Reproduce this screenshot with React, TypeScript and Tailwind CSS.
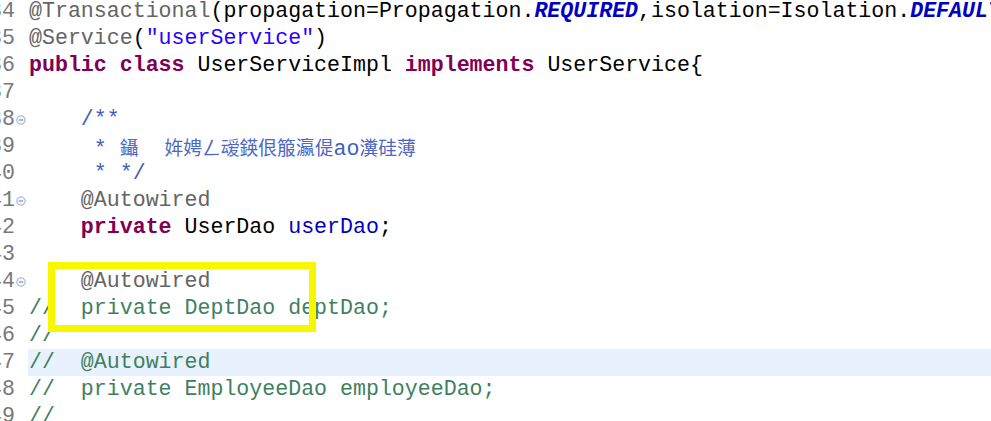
import React from "react";

type Tok = [string, string];

interface CodeLine {
  no: number;
  fold?: boolean;
  current?: boolean;
  toks: Tok[];
}

const ann = "text-[#646464]";
const kw = "text-[#7f0055] font-bold";
const str = "text-[#2a00ff]";
const sf = "text-[#0000c0] italic font-bold";
const field = "text-[#0000c0]";
const doc = "text-[#3f5fbf]";
const cm = "text-[#3f7f5f]";
const plain = "text-black";

const lines: CodeLine[] = [
  {
    no: 34,
    toks: [
      ["@Transactional", ann],
      ["(propagation=Propagation.", plain],
      ["REQUIRED", sf],
      [",isolation=Isolation.", plain],
      ["DEFAULT", sf],
      [")", plain],
    ],
  },
  { no: 35, toks: [["@Service", ann], ["(", plain], ['"userService"', str], [")", plain]] },
  {
    no: 36,
    toks: [
      ["public", kw],
      [" ", plain],
      ["class", kw],
      [" UserServiceImpl ", plain],
      ["implements", kw],
      [" UserService{", plain],
    ],
  },
  { no: 37, toks: [] },
  { no: 38, fold: true, toks: [["    /**", doc]] },
  { no: 39, toks: [["     * ", doc], ["CJK", doc]] },
  { no: 40, toks: [["     * */", doc]] },
  { no: 41, fold: true, toks: [["    @Autowired", ann]] },
  { no: 42, toks: [["    ", plain], ["private", kw], [" UserDao ", plain], ["userDao", field], [";", plain]] },
  { no: 43, toks: [] },
  { no: 44, fold: true, toks: [["    @Autowired", ann]] },
  { no: 45, toks: [["//  private DeptDao deptDao;", cm]] },
  { no: 46, toks: [["//", cm]] },
  { no: 47, current: true, toks: [["//  @Autowired", cm]] },
  { no: 48, toks: [["//  private EmployeeDao employeeDao;", cm]] },
  { no: 49, toks: [["//", cm]] },
];

const cjk = "font-['Noto_Sans_CJK_SC',sans-serif] text-[18.8px] text-[#4d68c4]";

// the garbled javadoc line (GBK read as UTF-8)
const Garbled: React.FC = () => (
  <>
    <span className={cjk}>鑷</span>
    <span>{"  "}</span>
    <span className={cjk}>姩娉ㄥ叆鍈佷箙瀛偍</span>
    <span className="underline decoration-wavy decoration-[#e0a030] decoration-1 underline-offset-4">ao</span>
    <span className={cjk}>瀵硅薄</span>
  </>
);

const FoldIcon: React.FC = () => (
  <svg width="10" height="10" viewBox="0 0 10 10">
    <circle cx="5" cy="5" r="4.2" fill="#f4f7fb" stroke="#9aabc4" strokeWidth="1" />
    <line x1="2.8" y1="5" x2="7.2" y2="5" stroke="#6a7f9e" strokeWidth="1" />
  </svg>
);

export default function App() {
  return (
    <div className="relative w-[991px] h-[421px] overflow-hidden bg-white font-['Liberation_Mono',monospace] text-[21.6px]">
      <div className="flex flex-col -mt-[2px]">
        {lines.map((line) => (
          <div key={line.no} className="flex flex-row h-[27px] leading-[27px]">
            {/* gutter: line number clipped on the left, then fold marker */}
            <div className="w-[15px] shrink-0 flex justify-end overflow-hidden text-[#787878]">
              <span className="shrink-0">{line.no}</span>
            </div>
            <div className="w-[13px] shrink-0 flex items-center justify-center pr-[1px] pt-[1px]">
              {line.fold && <FoldIcon />}
            </div>
            <div
              className={
                "flex-1 pl-[1px] whitespace-pre overflow-hidden " +
                (line.current ? "bg-[#e8f2fe]" : "bg-white")
              }
            >
              {line.toks.map(([text, cls], i) =>
                text === "CJK" ? (
                  <span key={i} className={doc}>
                    <Garbled />
                  </span>
                ) : (
                  <span key={i} className={cls}>
                    {text}
                  </span>
                )
              )}
            </div>
          </div>
        ))}
      </div>

      {/* yellow annotation box drawn over the code */}
      <div className="absolute left-[48px] top-[262px] w-[268px] h-[70px] border-[7px] border-[#f7f700]" />
    </div>
  );
}
